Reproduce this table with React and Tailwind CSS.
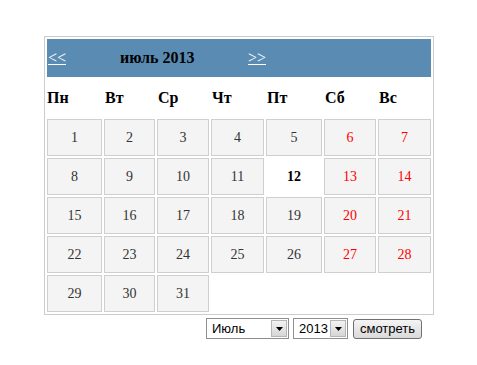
import React from "react";

const colWidths = "grid-cols-[55px_51px_52px_53px_56px_52px_53px]";
const weekDays = ["Пн", "Вт", "Ср", "Чт", "Пт", "Сб", "Вс"];
const today = 12;

const buildWeeks = () => {
    const days = [];
    for (let d = 1; d <= 31; d++) days.push(d);
    while (days.length % 7 !== 0) days.push(null);
    return days;
};

const DayCell = ({ day, index }) => {
    if (day === null) return <div className="h-[37px]"></div>;
    const weekend = index % 7 >= 5;

    if (day === today) {
        return (
            <div className="h-[37px] flex items-center justify-center bg-white font-bold text-black text-[14px]">
                {day}
            </div>
        );
    }

    return (
        <div
            className={`h-[37px] flex items-center justify-center border border-[#cfcfcf] bg-[#f4f4f4] text-[14px] ${
                weekend ? "text-[#ff0000]" : "text-[#333333]"
            }`}
        >
            {day}
        </div>
    );
};

const FakeSelect = ({ value, width }) => {
    return (
        <div
            className={`${width} h-[21px] flex items-center justify-between border border-[#8f8f8f] bg-white pl-[5px] pr-[1px] text-[13px] text-black font-["Liberation_Sans",Arial,sans-serif]`}
        >
            <span>{value}</span>
            <div className="w-[16px] h-[17px] flex items-center justify-center border border-[#b5b5b5] bg-gradient-to-b from-[#f3f3f3] to-[#d6d6d6]">
                <svg width="7" height="4" viewBox="0 0 7 4">
                    <path d="M0 0 L7 0 L3.5 4 Z" fill="#000" />
                </svg>
            </div>
        </div>
    );
};

const App = () => {
    const days = buildWeeks();

    return (
        <div className="w-[477px] h-[365px] bg-white pt-[36px] pl-[44px] font-['Liberation_Serif','Times_New_Roman',serif]">
            <div className="w-[390px] border border-[#cccccc] p-[2px] flex flex-col gap-[2px]">
                <div className="h-[38px] bg-[#5a8bb2] flex items-center text-[16px]">
                    <a href="#" className="w-[73px] text-white underline pl-[1px]">
                        &lt;&lt;
                    </a>
                    <span className="w-[128px] font-bold text-black">июль 2013</span>
                    <a href="#" className="text-white underline">
                        &gt;&gt;
                    </a>
                </div>

                <div className={`grid ${colWidths} gap-[2px] h-[38px] items-center`}>
                    {weekDays.map((w, i) => (
                        <div
                            key={w}
                            className={`font-bold text-[16px] text-black ${i === 0 ? "" : "pl-[1px]"}`}
                        >
                            {w}
                        </div>
                    ))}
                </div>

                <div className={`grid ${colWidths} gap-[2px]`}>
                    {days.map((d, i) => (
                        <DayCell key={i} day={d} index={i} />
                    ))}
                </div>
            </div>

            <div className="w-[390px] flex justify-end items-center pr-[12px] mt-[3px]">
                <FakeSelect value="Июль" width="w-[83px]" />
                <div className="w-[4px]"></div>
                <FakeSelect value="2013" width="w-[55px]" />
                <div className="w-[5px]"></div>
                <button className="w-[69px] h-[20px] rounded-[3px] border border-[#707070] bg-gradient-to-b from-[#f4f4f4] to-[#dadada] text-[13px] text-black font-['Liberation_Sans',Arial,sans-serif] leading-none">
                    смотреть
                </button>
            </div>
        </div>
    );
};

export default App;
